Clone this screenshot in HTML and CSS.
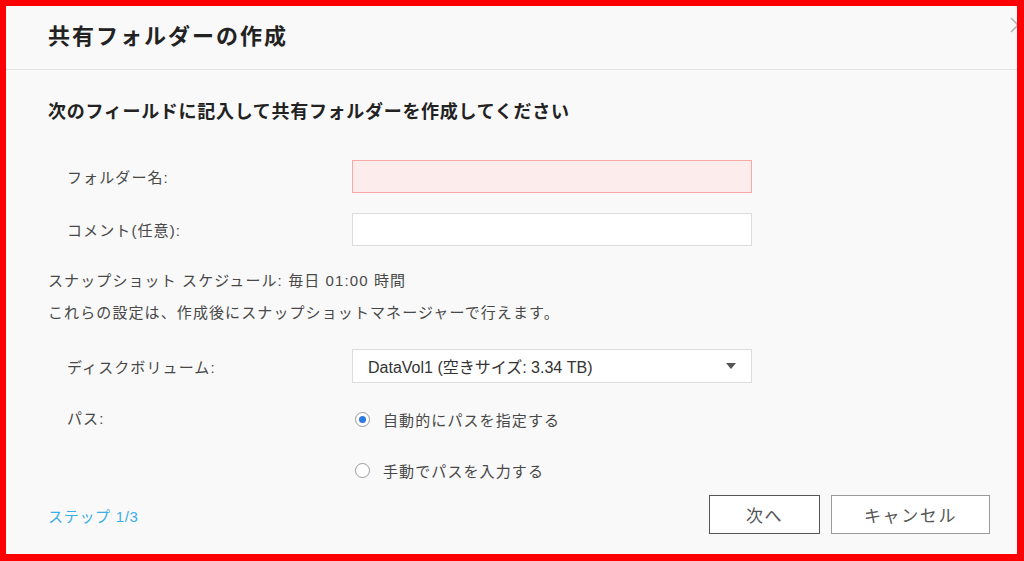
FILE: index.html
```html
<!DOCTYPE html>
<html lang="ja">
<head>
<meta charset="utf-8">
<title>共有フォルダーの作成</title>
<link rel="stylesheet" href="styles.css">
</head>
<body>
<div class="dialog">
  <div class="header">
    <h1 class="title">共有フォルダーの作成</h1>
    <svg class="close" width="18" height="18" viewBox="0 0 18 18"><path d="M2 2L16 16M16 2L2 16" stroke="#b5b5b5" stroke-width="1.6" fill="none"/></svg>
  </div>
  <div class="body">
    <h2 class="subtitle">次のフィールドに記入して共有フォルダーを作成してください</h2>
    <div class="row row-name">
      <div class="label">フォルダー名:</div>
      <div class="input input-error"></div>
    </div>
    <div class="row row-comment">
      <div class="label">コメント(任意):</div>
      <div class="input"></div>
    </div>
    <p class="note note-1">スナップショット スケジュール: 毎日 01:00 時間</p>
    <p class="note note-2">これらの設定は、作成後にスナップショットマネージャーで行えます。</p>
    <div class="row row-volume">
      <div class="label">ディスクボリューム:</div>
      <div class="select">
        <span>DataVol1 (空きサイズ: 3.34 TB)</span>
        <svg class="caret" width="10" height="6" viewBox="0 0 10 6"><path d="M0 0H10L5 6Z" fill="#555"/></svg>
      </div>
    </div>
    <div class="row row-path">
      <div class="label">パス:</div>
      <div class="radio-group">
        <div class="radio"><span class="dot checked"></span><span>自動的にパスを指定する</span></div>
        <div class="radio radio-2"><span class="dot"></span><span>手動でパスを入力する</span></div>
      </div>
    </div>
  </div>
  <div class="footer">
    <div class="step">ステップ 1/3</div>
    <div class="buttons">
      <button class="btn btn-next">次へ</button>
      <button class="btn btn-cancel">キャンセル</button>
    </div>
  </div>
</div>
</body>
</html>
```
FILE: styles.css
```css
html, body {
  margin: 0;
  padding: 0;
  background: #ff0000;
  width: 1024px;
  height: 561px;
  overflow: hidden;
}
body {
  font-family: "Liberation Sans", "Noto Sans CJK JP", sans-serif;
  color: #444;
  padding: 6px 7px 7px 6px;
  box-sizing: border-box;
}
.dialog {
  position: relative;
  width: 1011px;
  height: 548px;
  background: #f9f9f9;
  overflow: hidden;
  display: flex;
  flex-direction: column;
}
.header {
  height: 64px;
  border-bottom: 1px solid #e3e3e3;
  display: flex;
  align-items: center;
  padding-left: 42px;
  box-sizing: border-box;
}
.title {
  margin: 0;
  font-size: 22px;
  font-weight: bold;
  letter-spacing: 2px;
  color: #222;
  line-height: 30px;
  margin-top: -2px;
}
.close {
  position: absolute;
  top: 10px;
  right: -10px;
}
.body {
  padding: 30px 0 0 42px;
}
.subtitle {
  margin: 0;
  font-size: 18px;
  font-weight: bold;
  letter-spacing: 0.7px;
  color: #222;
  line-height: 24px;
}
.row {
  display: flex;
  align-items: center;
  padding-left: 19px;
}
.label {
  width: 285px;
  font-size: 15px;
  letter-spacing: 1.1px;
  color: #484848;
}
.row-name { margin-top: 36px; }
.row-comment { margin-top: 20px; }
.input {
  width: 400px;
  height: 33px;
  box-sizing: border-box;
  background: #fff;
  border: 1px solid #dcdcdc;
}
.input-error {
  background: #fdecec;
  border-color: #f7a9a7;
}
.note {
  margin: 0;
  font-size: 15px;
  letter-spacing: 1.1px;
  line-height: 20px;
  color: #484848;
}
.note-1 { margin-top: 25px; }
.note-2 { margin-top: 12px; }
.row-volume { margin-top: 26px; }
.select {
  width: 400px;
  height: 34px;
  box-sizing: border-box;
  background: #fff;
  border: 1px solid #dcdcdc;
  display: flex;
  align-items: center;
  justify-content: space-between;
  padding: 0 15px 0 15px;
  font-size: 16px;
  letter-spacing: 0;
  color: #333;
}
.row-path {
  margin-top: 26px;
  align-items: flex-start;
}
.row-path .label {
  line-height: 20px;
}
.radio-group {
  display: flex;
  flex-direction: column;
  gap: 31px;
}
.radio {
  display: flex;
  align-items: center;
  height: 20px;
  font-size: 15px;
  letter-spacing: 1.1px;
  color: #484848;
}
.dot {
  width: 15px;
  height: 15px;
  box-sizing: border-box;
  border: 1px solid #9a9a9a;
  border-radius: 50%;
  background: #fff;
  margin-left: 3px;
  margin-right: 13px;
  position: relative;
}
.dot.checked::after {
  content: "";
  position: absolute;
  left: 3px;
  top: 3px;
  width: 7px;
  height: 7px;
  border-radius: 50%;
  background: #2f78e0;
}
.footer {
  margin-top: auto;
  padding: 0 27px 20px 42px;
  display: flex;
  align-items: flex-end;
  justify-content: space-between;
}
.step {
  font-size: 15px;
  color: #3aaee6;
  letter-spacing: 0.7px;
  line-height: 20px;
  margin-bottom: 7px;
}
.buttons {
  display: flex;
  gap: 11px;
}
.btn {
  height: 39px;
  font-family: inherit;
  font-size: 17px;
  letter-spacing: 1.6px;
  color: #555;
  background: #fff;
  padding: 0;
  cursor: pointer;
}
.btn-next {
  width: 111px;
  border: 1px solid #555;
}
.btn-cancel {
  width: 159px;
  border: 1px solid #9a9a9a;
}
```
